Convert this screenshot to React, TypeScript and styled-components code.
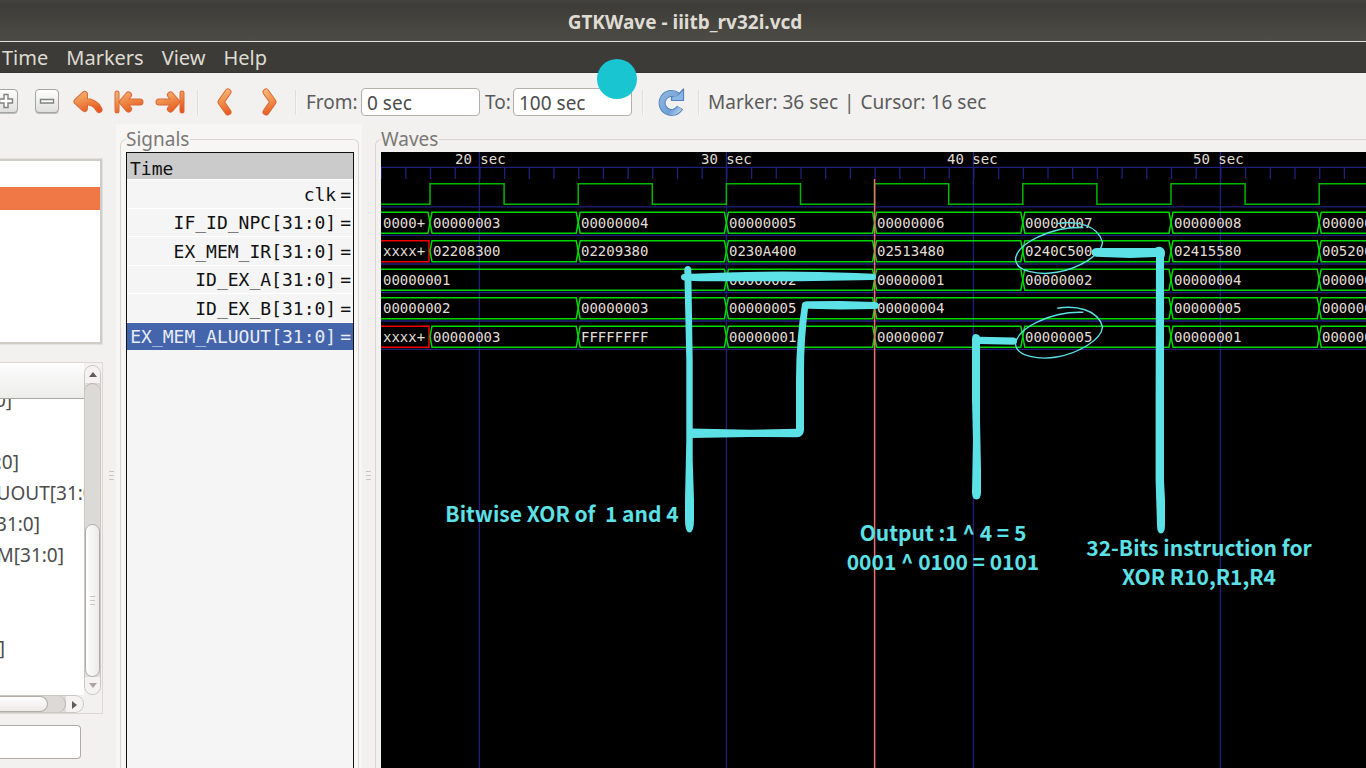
import React from "react";
import styled, { createGlobalStyle } from "styled-components";

const UI = '"Noto Sans", "Open Sans", sans-serif';
const MONO = '"DejaVu Sans Mono", monospace';
const CYAN = "#5ce1e6";

const GlobalStyle = createGlobalStyle`
  * { box-sizing: border-box; }
  body { margin: 0; background: #f2f1f0; font-family: ${UI}; font-size: 19px; color: #4c4c4c; overflow: hidden; }
`;

const Window = styled.div`
  position: relative;
  display: flex;
  flex-direction: column;
  height: 100vh;
`;

const TitleBar = styled.header`
  height: 41px;
  padding: 2px 0 0 4px;
  display: flex;
  align-items: center;
  justify-content: center;
  background: linear-gradient(#45443f, #3c3b37 4px, #4d4c46);
`;

const Title = styled.h1`
  margin: 0;
  font-size: 19px;
  line-height: 24px;
  font-weight: 700;
  color: #dfdbd2;
`;

const MenuBar = styled.nav`
  display: flex;
  gap: 18px;
  height: 32px;
  padding: 2px 0 0 2px;
  align-items: center;
  background: #3c3b37;
  border-top: 1px solid #e4e2de;
  border-bottom: 1px solid #353430;
`;

const MenuItem = styled.button`
  border: 0;
  padding: 0;
  background: none;
  font: 20px/24px ${UI};
  color: #dfdbd2;
`;

const Toolbar = styled.div`
  display: flex;
  align-items: center;
  height: 51px;
  margin-left: -8px;
  padding-top: 7px;
  flex: none;
  white-space: nowrap;
`;

const Tool = styled.button<{ $w: number; $after?: number }>`
  width: ${(p) => p.$w}px;
  height: 32px;
  margin-right: ${(p) => p.$after ?? 0}px;
  flex: none;
  display: flex;
  align-items: center;
  justify-content: center;
  padding: 0;
  border: 0;
  background: none;
`;

const ToolIcon = styled.svg`
  flex: none;
  display: block;
`;

const Divider = styled.span<{ $before: number; $after: number }>`
  width: 2px;
  height: 25px;
  flex: none;
  margin: 0 ${(p) => p.$after}px 0 ${(p) => p.$before}px;
  background: #e0deda;
  border-right: 1px solid #f7f6f5;
`;

const FieldLabel = styled.label<{ $w: number }>`
  width: ${(p) => p.$w}px;
  flex: none;
  color: #5b5b5b;
`;

const TimeInput = styled.input`
  width: 119px;
  height: 28px;
  margin-right: 5px;
  flex: none;
  padding: 2px 5px 0;
  border: 1px solid #b4afa9;
  border-radius: 4px;
  background: #fff;
  font: 19px/24px ${UI};
  color: #4c4c4c;
`;

const Status = styled.div`
  display: flex;
  gap: 6px;
  color: #5b5b5b;
`;

const Main = styled.main`
  display: flex;
  flex: 1;
  min-height: 0;
`;

const Side = styled.aside`
  width: 103px;
  flex: none;
  display: flex;
  flex-direction: column;
  padding-top: 35px;
`;

const Tree = styled.div`
  height: 185px;
  margin-right: 1px;
  padding-top: 26px;
  background: #fff;
  border: 2px solid #cfccc8;
  border-left: 0;
  outline: 1px solid #e3e1de;
  flex: none;
`;

const TreeSelected = styled.div`
  height: 23px;
  background: #f07746;
`;

const SignalBrowser = styled.div`
  height: 352px;
  margin-top: 18px;
  display: grid;
  grid-template: 332px 1fr / 84px 17px;
  border: 1px solid #dbd8d5;
  border-left: 0;
  flex: none;
`;

const BrowserList = styled.div`
  overflow: hidden;
  background: #fff;
`;

const BrowserHeader = styled.div`
  position: relative;
  height: 36px;
  background: linear-gradient(#fdfdfd, #ededeb);
  border-bottom: 1px solid #a9a5a0;
`;

const BrowserRows = styled.ul`
  margin: -14px 0 0;
  padding: 0;
  list-style: none;
`;

const BrowserRow = styled.li<{ $end: number }>`
  display: flex;
  justify-content: flex-end;
  width: ${(p) => p.$end}px;
  height: 31px;
  line-height: 31px;
  white-space: nowrap;
`;

const Scroll = styled.div<{ $row?: boolean }>`
  display: flex;
  flex-direction: ${(p) => (p.$row ? "row" : "column")};
  margin: ${(p) => (p.$row ? "0" : "2px 0 0")};
  border: 1px solid #cbc7c2;
  border-left-width: ${(p) => (p.$row ? "0" : "1px")};
  border-radius: ${(p) => (p.$row ? "0 9px 9px 0" : "9px")};
  background: #dedcd9;
  overflow: hidden;
`;

const ScrollArrow = styled.button<{ $side?: boolean }>`
  width: ${(p) => (p.$side ? "17px" : "auto")};
  height: 17px;
  padding: 0;
  flex: none;
  display: flex;
  align-items: center;
  justify-content: center;
  border: 0;
  background: #f4f3f2;
`;

const Trough = styled.div<{ $row?: boolean }>`
  flex: 1;
  display: flex;
  align-items: stretch;
  flex-direction: ${(p) => (p.$row ? "row" : "column")};
  justify-content: ${(p) => (p.$row ? "flex-start" : "flex-end")};
  border: 1px solid #b9b4ae;
  border-width: ${(p) => (p.$row ? "0 1px 0 0" : "1px 0 0")};
  border-radius: ${(p) => (p.$row ? "0 9px 9px 0" : "9px 9px 0 0")};
  background: #dcdad7;
`;

const Thumb = styled.div<{ $row?: boolean }>`
  display: flex;
  align-items: center;
  justify-content: center;
  width: ${(p) => (p.$row ? "48px" : "auto")};
  height: ${(p) => (p.$row ? "auto" : "153px")};
  border: 1px solid #b1aca6;
  border-left-width: ${(p) => (p.$row ? "0" : "1px")};
  border-radius: ${(p) => (p.$row ? "0 9px 9px 0" : "9px")};
  background: linear-gradient(${(p) => (p.$row ? "180deg" : "90deg")}, #fff, #ebeae8);
`;

const Grip = styled.span`
  width: 5px;
  height: 10px;
  background: repeating-linear-gradient(#c9c6c2 0 1px, transparent 1px 4px);
`;

const Filter = styled.input`
  width: 81px;
  height: 34px;
  margin-top: 11px;
  flex: none;
  border: 1px solid #b0aba5;
  border-left: 0;
  border-radius: 0 4px 4px 0;
  background: #fff;
`;

const Sash = styled.div<{ $inset: number }>`
  width: 13px;
  flex: none;
  padding: 347px 0 0 ${(p) => p.$inset}px;
  display: flex;
`;

const SignalPane = styled.section`
  width: 246px;
  flex: none;
  display: flex;
  padding: 4px 3px 0 4px;
  background: #f7f6f5;
`;

const WavePane = styled.section`
  flex: 1;
  min-width: 0;
  display: flex;
  padding: 4px 0 0;
`;

const Frame = styled.fieldset<{ $open?: boolean }>`
  flex: 1;
  min-width: 0;
  margin: 0;
  padding: 2px ${(p) => (p.$open ? 0 : 4)}px 0 5px;
  display: flex;
  flex-direction: column;
  border: 1px solid #d9d6d2;
  border-right-width: ${(p) => (p.$open ? 0 : 1)}px;
  border-bottom: 0;
  border-radius: 6px ${(p) => (p.$open ? 0 : 6)}px 0 0;
`;

const Legend = styled.legend`
  padding: 0 1px 0 0;
  line-height: 22px;
  color: #7b7875;
`;

const SignalList = styled.div`
  flex: 1;
  border: 1px solid #111;
  border-bottom: 0;
  background: #f5f5f5;
  font: 18px/24px ${MONO};
  color: #111;
  white-space: pre;
`;

const TimeHead = styled.div`
  height: 26px;
  padding: 4px 0 0 3px;
  background: #cbcbcb;
`;

const SignalRows = styled.div`
  display: grid;
  grid-auto-rows: 1fr;
  height: 171px;
`;

const SignalRow = styled.div<{ $selected?: boolean }>`
  display: flex;
  align-items: center;
  justify-content: flex-end;
  gap: 4px;
  padding: 2px 2px 0 3px;
  border-top: 1px solid #fff;
  background: ${(p) => (p.$selected ? "#4464ac" : "transparent")};
  color: ${(p) => (p.$selected ? "#e8edf7" : "#111")};
`;

const Canvas = styled.svg`
  flex: 1;
  display: block;
  width: 100%;
  min-height: 0;
  background: #000;
`;

const ValueText = styled.text`
  font: 14px ${MONO};
  fill: #e2ded6;
`;

const NoteText = styled.text`
  font: 700 21px "Noto Sans CJK JP", sans-serif;
  fill: ${CYAN};
  text-anchor: middle;
`;

const Pointer = styled.div`
  position: absolute;
  left: 597px;
  top: 59px;
  width: 40px;
  height: 40px;
  border-radius: 50%;
  background: #18c5d0;
`;

/* ---------- waveform data ---------- */

const START = 16;
const PX_PER_SEC = 24.7;
const END = 58;
const xOf = (t: number) => (t - START) * PX_PER_SEC - 0.4;

type Segment = [from: number, value: string];

const signals: { name: string; segments: Segment[] }[] = [
  {
    name: "IF_ID_NPC[31:0]",
    segments: [[16, "0000+"], [18, "00000003"], [24, "00000004"], [30, "00000005"], [36, "00000006"], [42, "00000007"], [48, "00000008"], [54, "00000009"]],
  },
  {
    name: "EX_MEM_IR[31:0]",
    segments: [[16, "xxxx+"], [18, "02208300"], [24, "02209380"], [30, "0230A400"], [36, "02513480"], [42, "0240C500"], [48, "02415580"], [54, "00520600"]],
  },
  {
    name: "ID_EX_A[31:0]",
    segments: [[16, "00000001"], [30, "00000002"], [36, "00000001"], [42, "00000002"], [48, "00000004"], [54, "00000001"]],
  },
  {
    name: "ID_EX_B[31:0]",
    segments: [[16, "00000002"], [24, "00000003"], [30, "00000005"], [36, "00000004"], [48, "00000005"], [54, "00000006"]],
  },
  {
    name: "EX_MEM_ALUOUT[31:0]",
    segments: [[16, "xxxx+"], [18, "00000003"], [24, "FFFFFFFF"], [30, "00000001"], [36, "00000007"], [42, "00000005"], [48, "00000001"], [54, "00000009"]],
  },
];

function Bus({ segments, top }: { segments: Segment[]; top: number }) {
  const bottom = top + 21;
  const mid = top + 10.5;
  return (
    <g>
      {segments.map(([from, value], i) => {
        const x0 = i === 0 ? -6 : xOf(from);
        const x1 = xOf(segments[i + 1]?.[0] ?? END);
        const unknown = value.startsWith("x");
        const d = unknown
          ? `M${x0} ${top}H${x1 - 1}V${bottom}H${x0}`
          : `M${x0} ${mid}L${x0 + 2} ${top}H${x1 - 2}L${x1} ${mid}L${x1 - 2} ${bottom}H${x0 + 2}Z`;
        return (
          <g key={from}>
            <path d={d} fill="none" stroke={unknown ? "#f00000" : "#00d800"} strokeWidth={1.5} />
            <ValueText x={Math.floor(xOf(from) + 3)} y={mid + 5}>{value}</ValueText>
          </g>
        );
      })}
    </g>
  );
}

function clockPath() {
  let d = `M-1 52.3`;
  for (let t = 18; t < END; t += 6) {
    d += `H${xOf(t)}V31.7H${xOf(t + 3)}V52.3`;
  }
  return d;
}

const LOOP = "M1057.3 308.3C1075 305.3 1098 309 1102.5 327C1101.5 340 1078 353.3 1056.7 357C1040 360 1016 356.7 1015.5 344C1017.3 327 1053 311 1083.3 312.3";

function Waves() {
  const ticks = Array.from({ length: END - START }, (_, i) => START + i);
  const tens = [20, 30, 40, 50];
  return (
    <Canvas role="img" aria-label="Waveforms">
      <g stroke="#20207c" strokeWidth={1.3}>
        <path d="M0 15.4H3000" />
        {ticks.map((t) => (
          <path key={t} d={`M${xOf(t) + 0.5} 16V27`} />
        ))}
        {[54.8, 83.4, 112, 140.5, 169, 197.4].map((y) => (
          <path key={y} d={`M0 ${y}H3000`} />
        ))}
        {tens.map((t) => (
          <path key={t} d={`M${xOf(t)} 0V3000`} />
        ))}
      </g>
      {tens.map((t, i) => (
        <ValueText key={t} x={74 + i * 246} y={12}>{t} sec</ValueText>
      ))}
      <path d={clockPath()} fill="none" stroke="#00b800" strokeWidth={1.5} />
      {signals.map((s, i) => (
        <Bus key={s.name} segments={s.segments} top={60.2 + i * 28.5} />
      ))}
      <path d={`M${xOf(36)} 27V3000`} stroke="#f27069" strokeWidth={1.5} />
      <g transform="translate(-381 -152)">
        <g fill={CYAN}>
          <path d="M684.3 270Q684.5 266 688 266Q691 266 691.3 270L692.7 360V460L694 500V520Q694 532.5 689.5 532.5Q685 532.5 685 520V500L686.3 440V360Z" />
          <path d="M684 274Q760 271 800 271.7Q840 272 873 273.7Q876 274 876 277Q876 280 873 280L800 281.3H700L684 280.5Q681 280 681 277Q681 274 684 274Z" />
          <path d="M802 304Q803 301.5 807 301.3L840 301L875 302Q879 302.5 879 305.5Q879 309 875 309L840 309.5L808 308.7Q804 340 804 370V430Q803.5 437 797 437.3L750 437L691 438V428.5L750 429.8L796 428.7V380Q796 340 802 304Z" />
          <path d="M972 339Q972 334 976 334Q979 334 980 336.7L1014 337.5Q1017 338 1017 341Q1017 344.5 1013 344.7L980 344V420L981 470V492Q981 499.5 976.5 499.5Q972 499.5 972 492L973 440L972 400Z" />
          <path d="M1096 248H1155Q1159 246 1162 247.5Q1165 249 1165 253Q1165 256 1164 258V480L1165 500V525Q1165 533.5 1161 533.5Q1157 533.5 1157 525L1155.6 480V400L1156 257L1130 258L1096 256.7Q1091.5 256 1091.5 252.5Q1091.5 248.5 1096 248Z" />
        </g>
        <g fill="none" stroke={CYAN} strokeWidth={1.4}>
          <path d={LOOP} />
          <path d={LOOP} transform="translate(0 -84.7)" />
        </g>
        <NoteText x={562} y={522}>Bitwise XOR of&nbsp; 1 and 4</NoteText>
        <NoteText x={943} y={541}>Output :1 ^ 4 = 5</NoteText>
        <NoteText x={943} y={570}>0001 ^ 0100 = 0101</NoteText>
        <NoteText x={1199} y={556}>32-Bits instruction for</NoteText>
        <NoteText x={1199} y={585}>XOR R10,R1,R4</NoteText>
      </g>
    </Canvas>
  );
}

/* ---------- toolbar icons ---------- */

function ZoomIcon({ plus }: { plus?: boolean }) {
  const glyph = plus
    ? "M11 6.5H15V11H19.5V15H15V19.5H11V15H6.5V11H11Z"
    : "M6.5 11.5H19.5V15H6.5Z";
  return (
    <ToolIcon width="26" height="28" viewBox="0 0 26 28">
      <rect x="1.5" y="3" width="23" height="23" rx="3.5" fill="#bcbcb8" />
      <rect x="1.5" y="1.5" width="23" height="23" rx="3.5" fill="url(#plate)" stroke="#a3a5a0" />
      <path d={glyph} fill="#fff" stroke="#80827d" strokeWidth="1.4" />
    </ToolIcon>
  );
}

function OrangeIcon({ d, w, bar }: { d: string; w: number; bar?: string }) {
  return (
    <ToolIcon width={w} height={28} viewBox={`0 0 ${w} 28`} fill="none" strokeLinecap="round" strokeLinejoin="round">
      {bar && <path d={bar} stroke="#dc6a38" strokeWidth={5} />}
      <path d={d} stroke="#dc6a38" strokeWidth={7} />
      {bar && <path d={bar} stroke="url(#amber)" strokeWidth={3} />}
      <path d={d} stroke="url(#amber)" strokeWidth={5} />
    </ToolIcon>
  );
}

function Gradients() {
  return (
    <ToolIcon width="0" height="0">
      <defs>
        <linearGradient id="amber" gradientUnits="userSpaceOnUse" x1="6" y1="2" x2="14" y2="26">
          <stop offset="0" stopColor="#f6b878" />
          <stop offset="0.5" stopColor="#ee8c4a" />
          <stop offset="1" stopColor="#e8571d" />
        </linearGradient>
        <linearGradient id="plate" x1="0" y1="0" x2="0" y2="1">
          <stop offset="0" stopColor="#fff" />
          <stop offset="1" stopColor="#dededb" />
        </linearGradient>
        <linearGradient id="sky" x1="0" y1="0" x2="1" y2="1">
          <stop offset="0" stopColor="#8db6e0" />
          <stop offset="0.7" stopColor="#6f9fd4" />
          <stop offset="1" stopColor="#b9cfe8" />
        </linearGradient>
      </defs>
    </ToolIcon>
  );
}

const browserRows: [string, number][] = [
  ["0]", 12], ["", 0], [":0]", 19], ["UOUT[31:0]", 100], ["31:0]", 40], ["M[31:0]", 64], ["", 0], ["", 0], ["]", 5],
];

export default function App() {
  return (
    <Window>
      <GlobalStyle />
      <TitleBar>
        <Title>GTKWave - iiitb_rv32i.vcd</Title>
      </TitleBar>
      <MenuBar>
        {["Time", "Markers", "View", "Help"].map((m) => (
          <MenuItem key={m}>{m}</MenuItem>
        ))}
      </MenuBar>
      <Toolbar>
        <Gradients />
        <Tool $w={28} $after={6} aria-label="Zoom in"><ZoomIcon plus /></Tool>
        <Tool $w={41} aria-label="Zoom out"><ZoomIcon /></Tool>
        <Tool $w={41} aria-label="Zoom undo">
          <OrangeIcon w={32} d="M12.5 6.500L5 13.500L12.500 20.500L12.500 7M6 13.500H13Q23 13.500 27 21.500" />
        </Tool>
        <Tool $w={41} aria-label="Zoom to start">
          <OrangeIcon w={32} d="M15.500 7L9.500 14L15.500 21M10 14H27" bar="M4 5V23" />
        </Tool>
        <Tool $w={41} aria-label="Zoom to end">
          <OrangeIcon w={32} d="M16.500 7L22.500 14L16.500 21M22 14H5" bar="M28 5V23" />
        </Tool>
        <Divider $before={7} $after={4} />
        <Tool $w={44} aria-label="Find previous edge"><OrangeIcon w={18} d="M12 4L5 14L12 24" /></Tool>
        <Tool $w={44} aria-label="Find next edge"><OrangeIcon w={18} d="M6 4L13 14L6 24" /></Tool>
        <Divider $before={4} $after={9} />
        <FieldLabel htmlFor="from" $w={55}>From:</FieldLabel>
        <TimeInput id="from" defaultValue="0 sec" />
        <FieldLabel htmlFor="to" $w={28}>To:</FieldLabel>
        <TimeInput id="to" defaultValue="100 sec" />
        <Divider $before={5} $after={7} />
        <Tool $w={40} aria-label="Reload">
          <ToolIcon width="30" height="30" viewBox="0 0 30 30" fill="none">
            <path d="M21.500 8.500A9.500 9.500 0 1 0 24 20.500" stroke="#4f84c0" strokeWidth="7" />
            <path d="M27.500 2V13.500H15.500V10L22 8Z" fill="#8bb5e2" stroke="#4f84c0" strokeWidth="1.200" strokeLinejoin="round" />
            <path d="M21.500 8.500A9.500 9.500 0 1 0 23.700 20.900" stroke="url(#sky)" strokeWidth="5.200" />
          </ToolIcon>
        </Tool>
        <Divider $before={7} $after={8} />
        <Status>
          <span>Marker: 36 sec</span>
          <span>|</span>
          <span>Cursor: 16 sec</span>
        </Status>
      </Toolbar>
      <Main>
        <Side>
          <Tree>
            <TreeSelected />
          </Tree>
          <SignalBrowser>
            <BrowserList>
              <BrowserHeader />
              <BrowserRows>
                {browserRows.map(([text, end], i) => (
                  <BrowserRow key={i} $end={end}>{text}</BrowserRow>
                ))}
              </BrowserRows>
            </BrowserList>
            <Scroll>
              <ScrollArrow aria-label="Scroll up">
                <svg width="8" height="5"><path d="M0 5L4 0L8 5Z" fill="#5f5c59" /></svg>
              </ScrollArrow>
              <Trough>
                <Thumb><Grip /></Thumb>
              </Trough>
              <ScrollArrow aria-label="Scroll down">
                <svg width="8" height="5"><path d="M0 0L4 5L8 0Z" fill="#a9a6a2" /></svg>
              </ScrollArrow>
            </Scroll>
            <Scroll $row>
              <Trough $row>
                <Thumb $row />
              </Trough>
              <ScrollArrow $side aria-label="Scroll right">
                <svg width="5" height="8"><path d="M0 0L5 4L0 8Z" fill="#5f5c59" /></svg>
              </ScrollArrow>
            </Scroll>
          </SignalBrowser>
          <Filter aria-label="Filter" />
        </Side>
        <Sash $inset={6}><Grip /></Sash>
        <SignalPane>
          <Frame>
            <Legend>Signals</Legend>
            <SignalList>
              <TimeHead>Time</TimeHead>
              <SignalRows>
                <SignalRow><span>clk</span><span>=</span></SignalRow>
                {signals.map((s, i) => (
                  <SignalRow key={s.name} $selected={i === signals.length - 1}>
                    <span>{s.name}</span>
                    <span>=</span>
                  </SignalRow>
                ))}
              </SignalRows>
            </SignalList>
          </Frame>
        </SignalPane>
        <Sash $inset={4}><Grip /></Sash>
        <WavePane>
          <Frame $open>
            <Legend>Waves</Legend>
            <Waves />
          </Frame>
        </WavePane>
      </Main>
      <Pointer />
    </Window>
  );
}
